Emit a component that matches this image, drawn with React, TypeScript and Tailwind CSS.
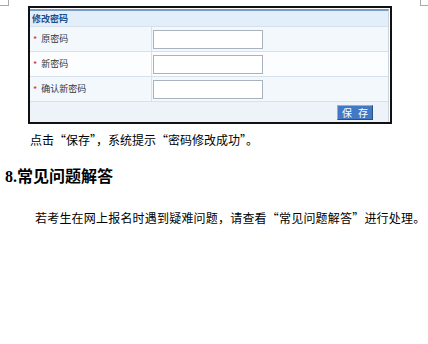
const cjk = { fontFamily: '"Noto Sans CJK SC", "Liberation Sans", sans-serif' };

function Row({ label, shade }: { label: string; shade: string }) {
  return (
    <div className={`flex h-[25px] border-t border-[#d6e1eb] ${shade}`}>
      <div className="flex w-[122px] items-center border-r border-[#d6e1eb] pl-[3px] text-[9px] text-[#333]">
        <span className="mr-[4px] text-[9px] leading-none text-[#d42a2a]">*</span>
        {label}
      </div>
      <div className="flex items-center pl-[1px]">
        <div className="h-[19px] w-[110px] border border-[#a9b3bf] bg-white" />
      </div>
    </div>
  );
}

export default function App() {
  return (
    <div className="relative h-[344px] w-[428px] bg-white text-black" style={cjk}>
      {/* page corner marks */}
      <div className="absolute left-0 top-0 h-[6px] w-[9px] border-b border-r border-[#a8a8a8]" />
      <div className="absolute right-0 top-0 h-[6px] w-[8px] border-b border-l border-[#a8a8a8]" />

      <div className="pt-[6px]">
        <div className="ml-[28px] h-[118px] w-[364px] border-2 border-[#111] bg-white pt-[1px] pr-[1px]">
          <div className="border-r border-[#c9d4df] border-t-2 border-t-[#7b9bc0]">
            <div className="flex h-[15px] items-center bg-[#e2eefa] pl-[2px] text-[9px] font-bold text-[#1b4d8a]">
              修改密码
            </div>
            <Row label="原密码" shade="bg-[#f3f8fd]" />
            <Row label="新密码" shade="bg-[#fbfdff]" />
            <Row label="确认新密码" shade="bg-[#f3f8fd]" />
            <div className="flex h-[21px] items-center justify-end border-t border-[#d6e1eb] bg-[#edf3f9] pr-[15px]">
              <div className="flex h-[15px] w-[36px] items-center justify-center gap-[6px] border border-t-[#8fb0de] border-l-[#8fb0de] border-b-[#2a4f86] border-r-[#2a4f86] bg-[#4378c4] text-[10px] text-white">
                <span>保</span>
                <span>存</span>
              </div>
            </div>
          </div>
        </div>

        <p className="mt-[8px] pl-[30px] text-[12px] leading-[16px]">
          点击“保存”，系统提示“密码修改成功”。
        </p>

        <h2
          className="mt-[19px] pl-[5px] text-[16px] font-bold leading-[20px]"
          style={{ fontFamily: '"Liberation Serif", "Noto Sans CJK SC", serif' }}
        >
          8.常见问题解答
        </h2>

        <p className="mt-[23px] pl-[35px] text-[12px] leading-[16px] tracking-[0.2px]">
          若考生在网上报名时遇到疑难问题，请查看“常见问题解答”进行处理。
        </p>
      </div>
    </div>
  );
}
